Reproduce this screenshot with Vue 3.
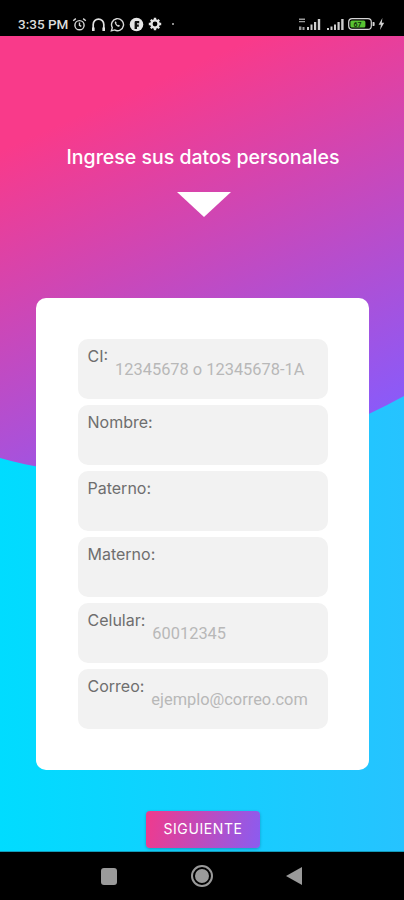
<template>
  <div class="screen">
    <div class="status-bar">
      <div class="status-left">
        <span class="clock">3:35 PM</span>
        <svg class="ic" width="15" height="15" viewBox="0 0 15 15" fill="none" stroke="#d8d8d8" stroke-width="1.4">
          <circle cx="7.5" cy="8.2" r="4.6" />
          <path d="M7.5 5.6v2.8l1.8 1M1.2 3.8l2.6-2.2M13.8 3.8l-2.6-2.2" />
        </svg>
        <svg class="ic" width="15" height="15" viewBox="0 0 15 15" fill="none" stroke="#e2e2e2" stroke-width="1.7">
          <path d="M2.2 13V7.4a5.3 5.3 0 0 1 10.6 0V13" />
          <path d="M1 10.5h2.6V14H1zM11.4 10.5H14V14h-2.6z" fill="#e2e2e2" stroke="none" />
        </svg>
        <svg class="ic" width="15" height="15" viewBox="0 0 15 15" fill="none" stroke="#d8d8d8" stroke-width="1.4">
          <path d="M1.4 13.8l.9-3.2a6 6 0 1 1 2.3 2.3z" />
          <path d="M5.2 4.6c-.8.8-.5 2 .6 3.3 1.2 1.4 2.6 2.2 3.6 1.6l.6-.9-1.5-.9-.6.5c-.7-.3-1.3-1-1.7-1.7l.5-.6-.8-1.5z" fill="#d8d8d8" stroke="none" />
        </svg>
        <svg class="ic" width="15" height="15" viewBox="0 0 15 15">
          <circle cx="7.5" cy="7.5" r="6.8" fill="#e6e6e6" />
          <path d="M5.6 12V5.4c0-.9.6-1.4 1.4-1.4h3.2v2.3H8v1.2h1.8v2.2H8V12z" fill="#111" />
        </svg>
        <svg class="ic" width="14" height="14" viewBox="0 0 14 14">
          <circle cx="7" cy="7" r="3.6" fill="none" stroke="#e6e6e6" stroke-width="2.4" />
          <path d="M5.8.8h2.4v2.4H5.8zM5.8 10.8h2.4v2.4H5.8zM.8 5.8h2.4v2.4H.8zM10.8 5.8h2.4v2.4h-2.4zM2 3.6L3.6 2l1.5 1.5-1.6 1.6zM8.9 10.5l1.6-1.6 1.5 1.5-1.6 1.6zM10.4 2L12 3.6l-1.5 1.5-1.6-1.6zM3.6 12L2 10.4l1.5-1.5 1.6 1.6z" fill="#e6e6e6" />
        </svg>
        <span class="dot"></span>
      </div>
      <div class="status-right">
        <svg width="25" height="14" viewBox="0 0 25 14" fill="#cfcfcf">
          <path d="M1 1.5h6v1.4H1zM1 4h6v1.2H1zM1 9.5h2.4V13H1zM4.5 10h2v3h-2z" opacity=".75" />
          <path d="M9 10h2v3H9zM12.5 7.5h2V13h-2zM16 5h2.2v8H16zM19.8 2h2.4v11h-2.4z" />
        </svg>
        <svg width="19" height="14" viewBox="0 0 19 14" fill="#cfcfcf">
          <path d="M1 11h2v2H1zM4.5 9.5h2V13h-2zM8 7.5h2V13H8zM11.5 5h2.2v8h-2.2zM15.2 2h2.4v11h-2.4z" />
        </svg>
        <svg width="27" height="12" viewBox="0 0 27 12">
          <rect x=".7" y=".7" width="22.6" height="10.6" rx="3.4" fill="none" stroke="#d5d5d5" stroke-width="1.2" />
          <rect x="2.4" y="2.4" width="15" height="7.2" rx="1.5" fill="#58c332" />
          <text x="9.6" y="8.6" text-anchor="middle" font-family="Roboto, sans-serif" font-size="7" font-weight="700" fill="#14300c">67</text>
          <path d="M24.6 4h1c.7 0 1 .5 1 1v2c0 .5-.3 1-1 1h-1z" fill="#d5d5d5" />
        </svg>
        <svg width="7" height="12" viewBox="0 0 7 12"><path d="M4.4 0L.6 6.8h2.3L2 12l4.2-7.2H3.8z" fill="#cfcfcf" /></svg>
      </div>
    </div>

    <main class="content">
      <svg class="wave" viewBox="0 0 404 460" preserveAspectRatio="none">
        <defs>
          <linearGradient id="cyan" x1="0" y1="0" x2="1" y2="0">
            <stop offset="0" stop-color="#00dcff" />
            <stop offset="1" stop-color="#26c3ff" />
          </linearGradient>
        </defs>
        <path d="M0 67C110 100 280 74 404 5V460H0Z" fill="url(#cyan)" />
      </svg>

      <h1 class="title">Ingrese sus datos personales</h1>
      <div class="arrow"></div>

      <form class="card" @submit.prevent>
        <div v-for="field in fields" :key="field.label" class="field">
          <label>{{ field.label }}</label>
          <input type="text" :placeholder="field.placeholder" />
        </div>
      </form>

      <button type="button" class="next-btn">SIGUIENTE</button>
    </main>

    <nav class="nav-bar">
      <span class="nav-square"></span>
      <span class="nav-circle"></span>
      <span class="nav-back"></span>
    </nav>
  </div>
</template>

<script setup>
const fields = [
  { label: 'CI:', placeholder: '12345678 o 12345678-1A' },
  { label: 'Nombre:', placeholder: '' },
  { label: 'Paterno:', placeholder: '' },
  { label: 'Materno:', placeholder: '' },
  { label: 'Celular:', placeholder: '60012345' },
  { label: 'Correo:', placeholder: 'ejemplo@correo.com' }
];
</script>

<style>
body {
  background: #000;
}
</style>

<style scoped>
.screen {
  width: 404px;
  height: 900px;
  display: flex;
  flex-direction: column;
  overflow: hidden;
  font-family: Inter, "Liberation Sans", sans-serif;
}

.status-bar {
  height: 36px;
  flex: none;
  background: #000;
  display: flex;
  justify-content: space-between;
  align-items: center;
  padding: 12px 19px 0 18px;
  box-sizing: border-box;
}

.status-left,
.status-right {
  display: flex;
  align-items: center;
}

.status-left {
  gap: 4px;
}

.status-right {
  gap: 3px;
}

.clock {
  font-family: Roboto, sans-serif;
  font-size: 13.5px;
  font-weight: 500;
  color: #dcdcdc;
}

.dot {
  width: 2px;
  height: 2px;
  margin-left: 6px;
  border-radius: 50%;
  background: #bbb;
}

.content {
  position: relative;
  flex: 1;
  display: flex;
  flex-direction: column;
  align-items: center;
  background: linear-gradient(156deg, #f93a8a 11.5%, #8b5af8 54.5%);
  border-bottom: 1px solid #139ab8;
}

.wave {
  position: absolute;
  left: 0;
  right: 0;
  bottom: 0;
  width: 404px;
  height: 460px;
}

.title {
  position: relative;
  margin: 109px 0 0 2px;
  font-size: 19.5px;
  line-height: 24px;
  font-weight: 500;
  color: #fff;
}

.arrow {
  position: relative;
  width: 0;
  height: 0;
  margin: 23px 0 0 4px;
  border-left: 27px solid transparent;
  border-right: 27px solid transparent;
  border-top: 25px solid #fff;
}

.card {
  position: relative;
  width: 333px;
  height: 472px;
  box-sizing: border-box;
  margin-top: 81px;
  padding: 41px 41px 0 42px;
  background: #fff;
  border-radius: 10px;
  display: flex;
  flex-direction: column;
  gap: 6px;
}

.field {
  height: 60px;
  box-sizing: border-box;
  display: flex;
  gap: 7px;
  padding: 8px 10px 0;
  background: #f2f2f2;
  border-radius: 10px;
}

.field label {
  flex: none;
  font-size: 16px;
  line-height: 19px;
  color: #6e6e6e;
}

.field input {
  flex: 1;
  min-width: 0;
  height: 24px;
  margin-top: 10px;
  padding: 0;
  border: none;
  outline: none;
  background: transparent;
  font-family: Roboto, sans-serif;
  font-size: 16.4px;
}

.field input::placeholder {
  color: #b8b8b8;
  opacity: 1;
}

.next-btn {
  position: relative;
  width: 114px;
  height: 37px;
  margin: 41px 0 0 2px;
  padding: 0 0 3px;
  border: none;
  border-radius: 4px;
  background: linear-gradient(100deg, #f03a8c, #8b5cf0);
  box-shadow: 0 1px 3px rgba(0, 0, 0, 0.25);
  color: #fff;
  font-family: Inter, sans-serif;
  font-size: 14px;
  font-weight: 400;
  letter-spacing: 0.6px;
}

.nav-bar {
  height: 48px;
  flex: none;
  background: #000;
  display: flex;
  align-items: center;
  padding: 0 102px 0 101px;
  justify-content: space-between;
}

.nav-square {
  width: 16px;
  height: 17px;
  border-radius: 3px;
  background: #9a9a9a;
}

.nav-circle {
  width: 14px;
  height: 14px;
  border-radius: 50%;
  background: #9a9a9a;
  border: 2px solid #000;
  outline: 2px solid #9a9a9a;
}

.nav-back {
  width: 0;
  height: 0;
  border-top: 9px solid transparent;
  border-bottom: 9px solid transparent;
  border-right: 16px solid #9a9a9a;
}
</style>
